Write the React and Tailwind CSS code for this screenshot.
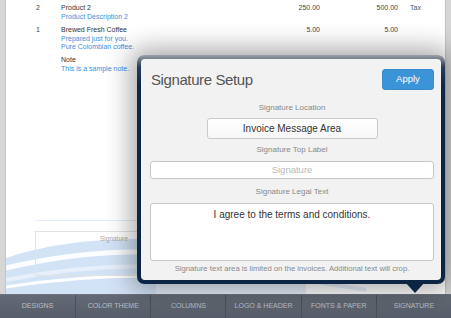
const TABS = ['DESIGNS', 'COLOR THEME', 'COLUMNS', 'LOGO & HEADER', 'FONTS & PAPER', 'SIGNATURE'];

function InvoiceRow({ qty, name, lines, price, amount, tax }) {
  return (
    <div className="flex leading-[9px]">
      <div className="w-[55px] pl-[30px] text-[#444]">{qty}</div>
      <div className="w-[200px]">
        <div className="text-[#333]">{name}</div>
        <div className="mt-px text-[#3b8fdf] leading-[8.5px]">
          {lines.map((l) => (
            <div key={l}>{l}</div>
          ))}
        </div>
      </div>
      <div className="w-[59px] text-right text-[#444]">{price}</div>
      <div className="w-[78px] text-right text-[#444]">{amount}</div>
      <div className="pl-[12px] text-[#555]">{tax}</div>
    </div>
  );
}

function Waves() {
  return (
    <svg className="absolute left-0 bottom-0" width="441" height="60" viewBox="0 0 441 60">
      <path d="M0 24 C40 10 90 4 150 5 L150 60 L0 60 Z" fill="#d3e3f6" />
      <path d="M0 34 C50 22 100 16 160 18 C220 20 280 30 340 40" stroke="#ffffff" strokeWidth="5" fill="none" opacity="0.9" />
      <path d="M0 46 C60 34 120 30 180 34 C250 38 300 46 360 56" stroke="#e6effa" strokeWidth="4" fill="none" />
      <path d="M0 53 C70 42 140 40 200 44" stroke="#ffffff" strokeWidth="3" fill="none" />
      <path d="M150 5 C200 8 240 12 300 22 L300 60 L150 60 Z" fill="#e6eff9" />
    </svg>
  );
}

function Popover() {
  return (
    <div className="absolute left-[137px] top-[55px] w-[308px] h-[229px] rounded-[7px] p-[4px] bg-[linear-gradient(to_bottom,#9aa0a8_0px,#2a3d58_12px,#0f2747_30px,#0d2545_100%)] shadow-[0_0_26px_6px_rgba(0,0,0,0.35)]">
      <div className="h-full rounded-[4px] bg-[#f2f2f2] pl-[9px] pr-[7px] pt-[10px] flex flex-col items-center">
        <div className="w-full flex items-center justify-between">
          <div className="text-[15px] tracking-[-0.4px] text-[#555] leading-[18px] pl-px">Signature Setup</div>
          <button className="w-[52px] h-[21px] rounded-[3px] bg-[#3b93d8] border border-[#3a8bcc] text-white text-[9.5px]">
            Apply
          </button>
        </div>
        <div className="mt-[13px] text-[8px] leading-[10px] text-[#888]">Signature Location</div>
        <button className="mt-[5px] w-[171px] h-[21px] rounded-[3px] border border-[#c9c9c9] bg-[linear-gradient(to_bottom,#ffffff,#f7f7f7)] text-[10px] text-[#333]">
          Invoice Message Area
        </button>
        <div className="mt-[6px] text-[8px] leading-[10px] text-[#888]">Signature Top Label</div>
        <div className="mt-[6px] w-full h-[18px] rounded-[3px] border border-[#c6c6c6] bg-white flex items-center justify-center text-[9.5px] text-[#b8b8b8]">
          Signature
        </div>
        <div className="mt-[8px] text-[8px] leading-[10px] text-[#888]">Signature Legal Text</div>
        <div className="mt-[6px] w-full h-[58px] rounded-[3px] border border-[#c6c6c6] bg-white pt-[5px] text-center text-[10px] leading-[12px] text-[#333]">
          I agree to the terms and conditions.
        </div>
        <div className="mt-[3px] text-[7.7px] leading-[10px] text-[#8a8a8a]">
          Signature text area is limited on the invoices. Additional text will crop.
        </div>
      </div>
      <svg className="absolute left-[268px] top-full -mt-[2px]" width="20" height="11" viewBox="0 0 20 11">
        <path d="M0 0 L20 0 L10 11 Z" fill="#0d2545" />
      </svg>
    </div>
  );
}

export default function App() {
  return (
    <div className="w-[451px] h-[318px] relative overflow-hidden flex flex-col bg-[#d6d6d6] font-['Liberation_Sans',Arial,sans-serif]">
      <div className="flex-1 flex px-[5px]">
        <div className="flex-1 relative bg-white border-x border-[#c4c4c4] pt-[3px] text-[7px] overflow-hidden">
          <Waves />
          <div className="relative flex flex-col gap-[3px]">
            <InvoiceRow qty="2" name="Product 2" lines={['Product Description 2']} price="250.00" amount="500.00" tax="Tax" />
            <InvoiceRow
              qty="1"
              name="Brewed Fresh Coffee"
              lines={['Prepared just for you.', 'Pure Colombian coffee.']}
              price="5.00"
              amount="5.00"
              tax=""
            />
            <InvoiceRow qty="" name="Note" lines={['This is a sample note.']} price="" amount="" tax="" />
          </div>
          <div className="relative ml-[29px] mt-[147px] w-[130px] h-px bg-[#e4eef9]" />
          <div className="relative ml-[29px] mt-[10px] w-[140px] h-[45px] border border-[#e2e2e2] pl-[64px] pt-[2px] text-[6.5px] text-[#aaa]">
            Signature
          </div>
        </div>
      </div>
      <div className="h-[24px] grid grid-cols-6 bg-[linear-gradient(to_bottom,#646a75,#585e69)] border-t border-[#6e7480]">
        {TABS.map((t, i) => (
          <div
            key={t}
            className={`flex items-center justify-center text-[7px] text-[#b9bdc5] ${i > 0 ? 'border-l border-[#4b5059]' : ''}`}
          >
            {t}
          </div>
        ))}
      </div>
      <Popover />
    </div>
  );
}
